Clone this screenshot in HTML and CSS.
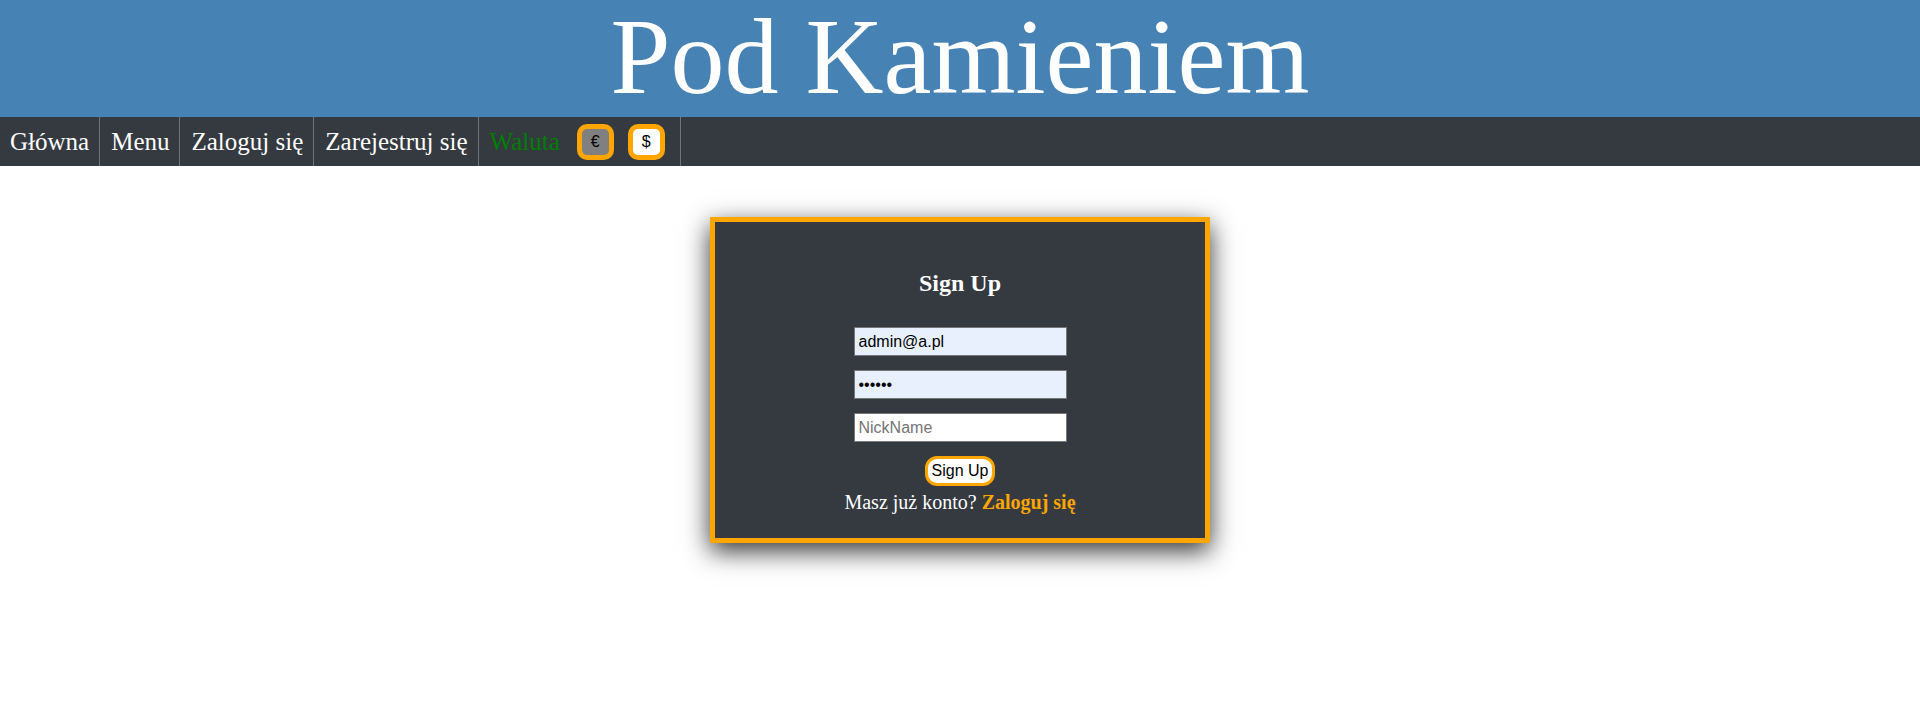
FILE: index.html
```html
<!DOCTYPE html>
<html lang="pl">
<head>
<meta charset="utf-8">
<title>Pod Kamieniem</title>
<link rel="stylesheet" href="styles.css">
</head>
<body>
<header class="site-header">
  <h1 class="site-title">Pod Kamieniem</h1>
</header>
<nav class="main-nav">
  <ul class="nav-list">
    <li class="nav-item"><a href="#" class="nav-link">Główna</a></li>
    <li class="nav-item"><a href="#" class="nav-link">Menu</a></li>
    <li class="nav-item"><a href="#" class="nav-link">Zaloguj się</a></li>
    <li class="nav-item"><a href="#" class="nav-link">Zarejestruj się</a></li>
    <li class="nav-item currency">
      <span class="currency-label">Waluta</span>
      <button class="cur-btn cur-active">€</button>
      <button class="cur-btn">$</button>
    </li>
  </ul>
</nav>
<main class="content">
  <section class="card">
    <h2 class="card-title">Sign Up</h2>
    <form class="signup-form">
      <input class="field autofill" type="email" value="admin@a.pl">
      <input class="field autofill" type="password" value="123456">
      <input class="field" type="text" placeholder="NickName">
      <button class="submit-btn" type="button">Sign Up</button>
      <p class="switch-text">Masz już konto? <a href="#" class="switch-link">Zaloguj się</a></p>
    </form>
  </section>
</main>
</body>
</html>
```
FILE: styles.css
```css
html, body {
  margin: 0;
  padding: 0;
  background: #ffffff;
  font-family: "Liberation Serif", "Times New Roman", serif;
}

.site-header {
  background: #4682b4;
  padding-bottom: 4px;
  text-align: center;
}

.site-title {
  margin: 0;
  font-weight: normal;
  font-size: 108px;
  line-height: 113px;
  color: #ffffff;
}

.main-nav {
  background: #343a40;
}

.nav-list {
  list-style: none;
  margin: 0;
  padding: 0;
  display: flex;
  align-items: stretch;
  height: 49px;
}

.nav-item {
  display: flex;
  align-items: center;
  padding: 0 10px;
  border-right: 1px solid #6c757d;
  font-size: 25px;
}

.nav-item + .nav-item {
  padding-left: 11px;
}

.nav-link {
  color: #ffffff;
  text-decoration: none;
}

.currency {
  padding-left: 10px;
  padding-right: 15px;
}

.currency-label {
  color: #008000;
  margin-right: 17px;
}

.cur-btn {
  font-family: "Liberation Sans", Arial, sans-serif;
  font-size: 16px;
  line-height: 18px;
  padding: 4px 9px;
  border: 5px solid #ffa500;
  border-radius: 10px;
  background: #ffffff;
  color: #000000;
  margin-right: 14px;
}

.cur-btn:last-child {
  margin-right: 0;
}

.cur-active {
  background: #808080;
}

.content {
  display: flex;
  justify-content: center;
  padding-top: 51px;
  padding-bottom: 80px;
}

.card {
  box-sizing: border-box;
  width: 500px;
  background: #343a40;
  border: 5px solid #ffa500;
  box-shadow: 0 8px 24px rgba(0, 0, 0, 0.8);
  padding: 28px 0 25px;
  text-align: center;
  color: #ffffff;
}

.card-title {
  margin: 20px 0 30px;
  font-size: 24px;
  font-weight: bold;
}

.signup-form {
  display: flex;
  flex-direction: column;
  align-items: center;
  gap: 14px;
}

.field {
  box-sizing: border-box;
  width: 213px;
  height: 29px;
  padding: 0 4px;
  border: 1px solid #767676;
  background: #ffffff;
  font-family: "Liberation Sans", Arial, sans-serif;
  font-size: 16px;
  color: #000000;
  margin: 0;
}

.field::placeholder {
  color: #757575;
}

.autofill {
  background: #e8f0fe;
}

.submit-btn {
  font-family: "Liberation Sans", Arial, sans-serif;
  font-size: 16px;
  line-height: 18px;
  padding: 3px 4px;
  background: #ffffff;
  color: #000000;
  border: 3px solid #ffa500;
  border-radius: 12px;
}

.switch-text {
  margin: -9px 0 0;
  font-size: 20px;
  line-height: 22px;
}

.switch-link {
  color: #ffa500;
  font-weight: bold;
  text-decoration: none;
}
```
